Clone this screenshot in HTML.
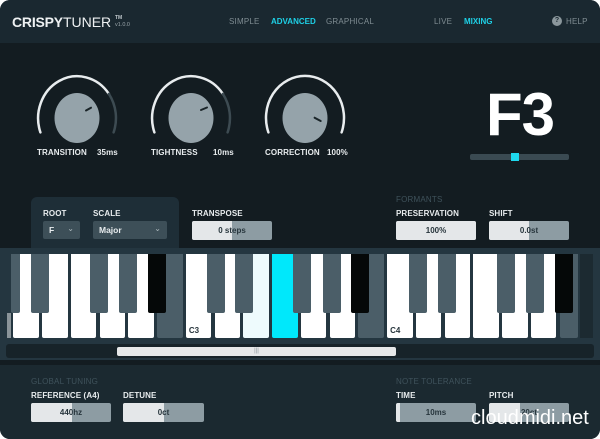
<!DOCTYPE html>
<html><head><meta charset="utf-8"><style>
*{margin:0;padding:0;box-sizing:border-box}
body{width:600px;height:439px;background:#fff;overflow:hidden;font-family:"Liberation Sans",sans-serif}
#app{position:absolute;left:0;top:0;width:600px;height:439px;background:#131c21;border-radius:10px;overflow:hidden}
.a{position:absolute}
.hdr{left:0;top:0;width:600px;height:43px;background:#1a2830}
.nav{font-size:8px;color:#7f8c92;top:17px;letter-spacing:.2px}
.cy{color:#1ed0e6;font-weight:bold;letter-spacing:0}
.lbl{font-size:8px;font-weight:bold;color:#e8ecee;letter-spacing:.1px}
.dim{font-size:8px;color:#3f525b;letter-spacing:.2px}
.fld{height:19px;background:#8d9ca3;border-radius:2px;overflow:hidden}
.fld i{position:absolute;left:0;top:0;bottom:0;background:#e4e7e9}
.fld span{position:absolute;left:0;right:0;top:5px;text-align:center;font-size:8px;font-weight:bold;color:#27353c}
.dd{height:18px;background:#3d4f58;border-radius:2px;color:#e8ecee;font-size:8.5px;font-weight:bold;padding:4px 0 0 6px}
.dd b{position:absolute;right:6px;top:3px;font-weight:normal;color:#aab6bb;font-size:8px}
.w{position:absolute;top:254px;height:84px;width:25.5px;background:#fff;border-radius:0 0 2px 2px}
.g{background:#4b5e68}
.bk{position:absolute;top:254px;height:59px;width:18px;background:#4b5e68;border-radius:0 0 2px 2px}
.k{background:#050808}
</style></head><body><div id="app">
<div class="a hdr"></div>
<div class="a" style="left:12px;top:14px;font-size:14px;color:#eef1f2;letter-spacing:-.2px"><b>CRISPY</b><span style="letter-spacing:0">TUNER</span></div>
<div class="a" style="left:115px;top:15px;font-size:5px;color:#c0c8cc;font-weight:bold">TM</div>
<div class="a" style="left:115px;top:22px;font-size:5.5px;color:#9aa5aa">v1.0.0</div>
<div class="a nav" style="left:229px">SIMPLE</div>
<div class="a nav cy" style="left:271px">ADVANCED</div>
<div class="a nav" style="left:326px">GRAPHICAL</div>
<div class="a nav" style="left:434px">LIVE</div>
<div class="a nav cy" style="left:464px">MIXING</div>
<div class="a" style="left:552px;top:16px;width:10px;height:10px;border-radius:50%;background:#8b979c;color:#1a2830;font-size:7px;font-weight:bold;text-align:center;line-height:10px">?</div>
<div class="a nav" style="left:566px">HELP</div>

<svg class="a" style="left:0;top:0" width="600" height="200">
<g fill="none" stroke-width="2.5" stroke-linecap="round">
<path d="M40.4,132.4 A39,42 0 0 1 108.9,93.9" stroke="#e8ecee"/>
<path d="M108.9,93.9 A39,42 0 0 1 113.6,132.4" stroke="#3d4b52"/>
<ellipse cx="77" cy="118" rx="22.5" ry="25" fill="#95a3aa" stroke="none"/>
<line x1="86" y1="110.5" x2="91" y2="107.7" stroke="#1a2428" stroke-width="2"/>
</g>
<g fill="none" stroke-width="2.5" stroke-linecap="round">
<path d="M154.4,132.4 A39,42 0 0 1 222.9,93.9" stroke="#e8ecee"/>
<path d="M222.9,93.9 A39,42 0 0 1 227.6,132.4" stroke="#3d4b52"/>
<ellipse cx="191" cy="118" rx="22.5" ry="25" fill="#95a3aa" stroke="none"/>
<line x1="201" y1="110" x2="207" y2="107.5" stroke="#1a2428" stroke-width="2"/>
</g>
<g fill="none" stroke-width="2.5" stroke-linecap="round">
<path d="M268.4,132.4 A39,42 0 1 1 341.6,132.4" stroke="#e8ecee"/>
<ellipse cx="305" cy="118" rx="22.5" ry="25" fill="#95a3aa" stroke="none"/>
<line x1="314.6" y1="117.7" x2="320.7" y2="121" stroke="#1a2428" stroke-width="2"/>
</g>
</svg>
<div class="a lbl" style="left:37px;top:148px">TRANSITION</div>
<div class="a lbl" style="left:97px;top:148px">35ms</div>
<div class="a lbl" style="left:151px;top:148px">TIGHTNESS</div>
<div class="a lbl" style="left:213px;top:148px">10ms</div>
<div class="a lbl" style="left:265px;top:148px">CORRECTION</div>
<div class="a lbl" style="left:327px;top:148px">100%</div>

<div class="a" style="left:486px;top:80px;font-size:60px;font-weight:bold;color:#fff;letter-spacing:-1px">F3</div>
<div class="a" style="left:470px;top:154px;width:99px;height:6px;background:#3a4a52;border-radius:2px"></div>
<div class="a" style="left:511px;top:153px;width:8px;height:8px;background:#1ed8ee"></div>

<div class="a" style="left:31px;top:197px;width:148px;height:55px;background:#1e2e37;border-radius:6px 6px 0 0"></div>
<div class="a lbl" style="left:43px;top:209px">ROOT</div>
<div class="a lbl" style="left:93px;top:209px">SCALE</div>
<div class="a dd" style="left:43px;top:221px;width:37px">F<b>&#8964;</b></div>
<div class="a dd" style="left:93px;top:221px;width:74px">Major<b>&#8964;</b></div>
<div class="a lbl" style="left:192px;top:209px">TRANSPOSE</div>
<div class="a fld" style="left:192px;top:221px;width:80px"><i style="width:40px"></i><span>0 steps</span></div>
<div class="a dim" style="left:396px;top:195px">FORMANTS</div>
<div class="a lbl" style="left:396px;top:209px">PRESERVATION</div>
<div class="a fld" style="left:396px;top:221px;width:80px"><i style="width:80px"></i><span>100%</span></div>
<div class="a lbl" style="left:489px;top:209px">SHIFT</div>
<div class="a fld" style="left:489px;top:221px;width:80px"><i style="width:40px"></i><span>0.0st</span></div>

<div class="a" style="left:0;top:248px;width:600px;height:112px;background:#243640"></div>
<div class="a" style="left:7px;top:313px;width:4px;height:25px;background:#8a9499"></div>
<div class="w" style="left:13.4px"></div>
<div class="w" style="left:42.1px"></div>
<div class="w" style="left:70.9px"></div>
<div class="w" style="left:99.6px"></div>
<div class="w" style="left:128.4px"></div>
<div class="w g" style="left:157.1px"></div>
<div class="w" style="left:185.9px"><span style="position:absolute;left:3px;bottom:3px;font-size:8px;font-weight:bold;color:#27353c">C3</span></div>
<div class="w" style="left:214.6px"></div>
<div class="w" style="left:243.4px;background:#eefbfd"></div>
<div class="w" style="left:272.1px;background:#00e8fb"></div>
<div class="w" style="left:300.9px"></div>
<div class="w" style="left:329.6px"></div>
<div class="w g" style="left:358.4px"></div>
<div class="w" style="left:387.1px"><span style="position:absolute;left:3px;bottom:3px;font-size:8px;font-weight:bold;color:#27353c">C4</span></div>
<div class="w" style="left:415.9px"></div>
<div class="w" style="left:444.6px"></div>
<div class="w" style="left:473.4px"></div>
<div class="w" style="left:502.1px"></div>
<div class="w" style="left:530.9px"></div>
<div class="w g" style="left:559.6px;width:18px"></div>
<div class="a" style="left:580px;top:254px;width:13px;height:84px;background:#1c2a31"></div>
<div class="bk" style="left:10.7px;width:9px"></div>
<div class="bk" style="left:31px"></div>
<div class="bk" style="left:90px"></div>
<div class="bk" style="left:119px"></div>
<div class="bk k" style="left:148px"></div>
<div class="bk" style="left:207px"></div>
<div class="bk" style="left:235px"></div>
<div class="bk" style="left:293px"></div>
<div class="bk" style="left:323px"></div>
<div class="bk k" style="left:351px"></div>
<div class="bk" style="left:409px"></div>
<div class="bk" style="left:438px"></div>
<div class="bk" style="left:497px"></div>
<div class="bk" style="left:526px"></div>
<div class="bk k" style="left:555px"></div>
<div class="a" style="left:6px;top:344px;width:588px;height:14px;background:#172329;border-radius:3px"></div>
<div class="a" style="left:117px;top:347px;width:279px;height:9px;background:#e6e8e9;border-radius:2px;text-align:center;font-size:6px;line-height:9px;color:#8a9499">|||</div>

<div class="a" style="left:0;top:365px;width:600px;height:74px;background:#1b2930"></div>
<div class="a dim" style="left:31px;top:377px">GLOBAL TUNING</div>
<div class="a lbl" style="left:31px;top:391px">REFERENCE (A4)</div>
<div class="a fld" style="left:31px;top:403px;width:80px"><i style="width:41px"></i><span>440hz</span></div>
<div class="a lbl" style="left:123px;top:391px">DETUNE</div>
<div class="a fld" style="left:123px;top:403px;width:81px"><i style="width:41px"></i><span>0ct</span></div>
<div class="a dim" style="left:396px;top:377px">NOTE TOLERANCE</div>
<div class="a lbl" style="left:396px;top:391px">TIME</div>
<div class="a fld" style="left:396px;top:403px;width:80px"><i style="width:4px"></i><span>10ms</span></div>
<div class="a lbl" style="left:489px;top:391px">PITCH</div>
<div class="a fld" style="left:489px;top:403px;width:80px"><i style="width:31px"></i><span>20ct</span></div>
<div class="a" style="left:471px;top:407px;font-size:20px;color:#fff">cloudmidi.net</div>
</div></body></html>
